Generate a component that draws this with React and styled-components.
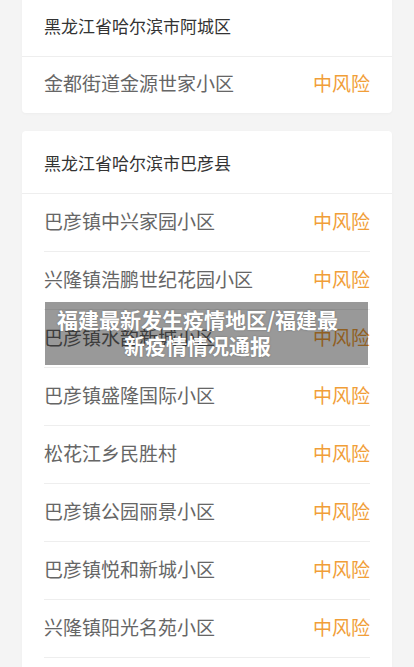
import React from 'react';
import styled, { createGlobalStyle } from 'styled-components';

const GlobalStyle = createGlobalStyle`
  html, body {
    margin: 0;
    padding: 0;
    background: #f4f4f4;
    font-family: "Noto Sans CJK SC", "Noto Sans", sans-serif;
  }
`;

const Page = styled.div`
  position: relative;
  width: 414px;
  height: 667px;
  overflow: hidden;
  background: #f4f4f4;
`;

const List = styled.div`
  display: flex;
  flex-direction: column;
  gap: 18px;
  padding: 0 22px;
  margin-top: -6px;
`;

const Card = styled.div`
  background: #fff;
  border-radius: 4px;
  box-shadow: 0 1px 3px rgba(0, 0, 0, 0.03);
  overflow: hidden;
`;

const CardHeader = styled.div`
  height: 62px;
  display: flex;
  align-items: center;
  padding: 0 22px;
  font-size: 17px;
  color: #333;
  border-bottom: 1px solid #eeeeee;
`;

const Row = styled.div`
  height: ${({ $last }) => ($last ? '56px' : '58px')};
  box-sizing: border-box;
  padding-bottom: 4px;
  margin: 0 22px;
  display: flex;
  align-items: center;
  justify-content: space-between;
  border-bottom: 1px solid ${({ $last }) => ($last ? 'transparent' : '#eeeeee')};
`;

const Place = styled.span`
  font-size: 19px;
  color: #666;
`;

const Risk = styled.span`
  font-size: 19px;
  color: #f19e38;
`;

const Banner = styled.div`
  position: absolute;
  left: 45px;
  top: 302px;
  width: 323px;
  height: 63px;
  box-sizing: border-box;
  padding: 4px 27px 0 9px;
  background: rgba(0, 0, 0, 0.4);
  color: #fff;
  font-size: 21px;
  font-weight: 700;
  line-height: 26px;
  text-align: center;
  text-shadow: 0 0 2px rgba(0, 0, 0, 0.3);
`;

const areas = [
  {
    title: '黑龙江省哈尔滨市阿城区',
    places: ['金都街道金源世家小区'],
  },
  {
    title: '黑龙江省哈尔滨市巴彦县',
    places: [
      '巴彦镇中兴家园小区',
      '兴隆镇浩鹏世纪花园小区',
      '巴彦镇水韵新城小区',
      '巴彦镇盛隆国际小区',
      '松花江乡民胜村',
      '巴彦镇公园丽景小区',
      '巴彦镇悦和新城小区',
      '兴隆镇阳光名苑小区',
      '兴隆镇幸福家园小区',
    ],
  },
];

export default function App() {
  return (
    <Page>
      <GlobalStyle />
      <List>
        {areas.map((area, i) => (
          <Card key={area.title}>
            <CardHeader>{area.title}</CardHeader>
            {area.places.map((p, j) => (
              <Row key={p} $last={i === 0 && j === area.places.length - 1}>
                <Place>{p}</Place>
                <Risk>中风险</Risk>
              </Row>
            ))}
          </Card>
        ))}
      </List>
      <Banner>福建最新发生疫情地区/福建最新疫情情况通报</Banner>
    </Page>
  );
}
